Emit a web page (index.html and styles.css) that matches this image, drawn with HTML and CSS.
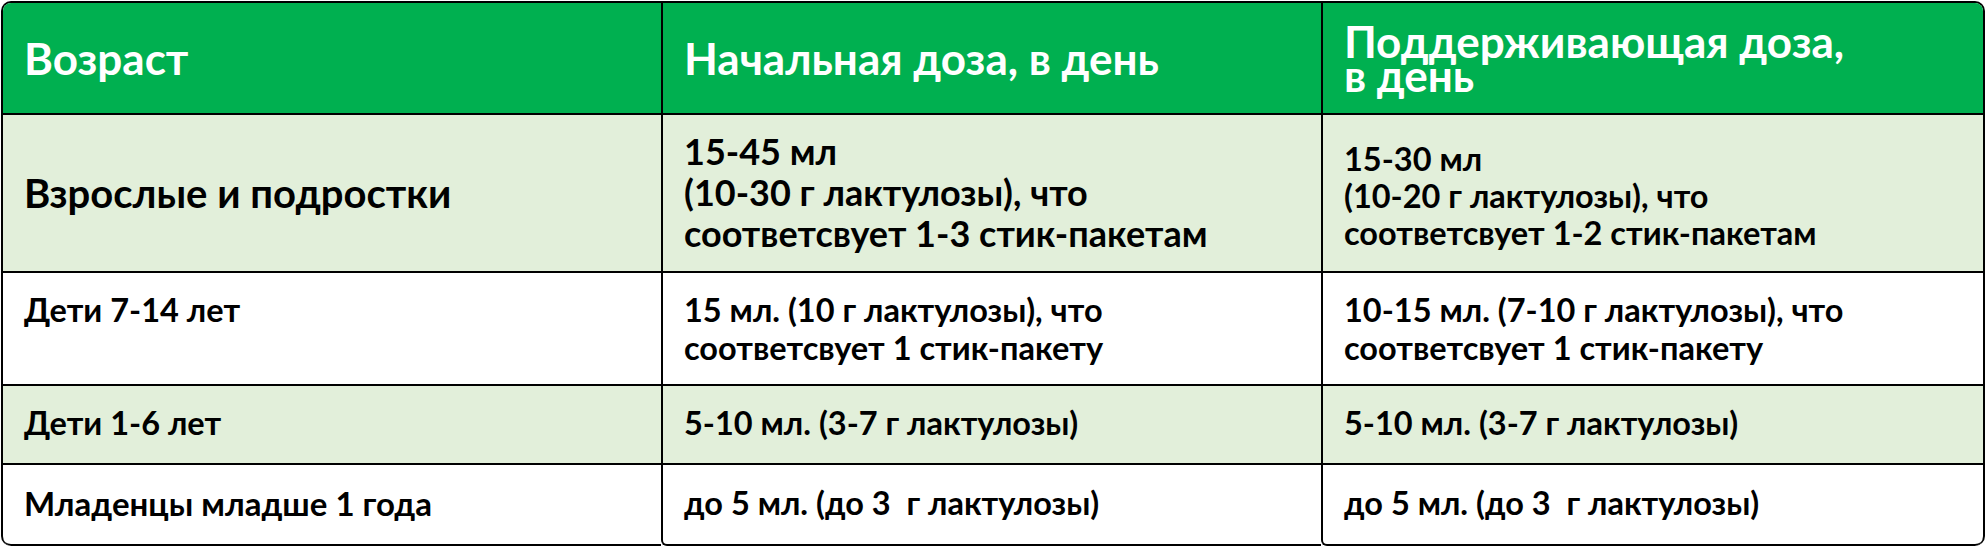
FILE: index.html
```html
<!DOCTYPE html>
<html lang="ru">
<head>
<meta charset="utf-8">
<title>Дозировка</title>
<link rel="stylesheet" href="styles.css">
</head>
<body>
<div class="frame">
  <div class="grid">
    <div class="cell head">Возраст</div>
    <div class="cell head col">Начальная доза, в день</div>
    <div class="cell head col two">Поддерживающая доза,<br>в день</div>

    <div class="cell r1 tint age">Взрослые и подростки</div>
    <div class="cell r1 tint col big">15-45 мл<br>(10-30 г лактулозы), что<br>соответсвует 1-3 стик-пакетам</div>
    <div class="cell r1 tint col mid">15-30 мл<br>(10-20 г лактулозы), что<br>соответсвует 1-2 стик-пакетам</div>

    <div class="cell row">Дети 7-14 лет</div>
    <div class="cell row col">15 мл. (10 г лактулозы), что<br>соответсвует 1 стик-пакету</div>
    <div class="cell row col">10-15 мл. (7-10 г лактулозы), что<br>соответсвует 1 стик-пакету</div>

    <div class="cell row tint">Дети 1-6 лет</div>
    <div class="cell row tint col">5-10 мл. (3-7 г лактулозы)</div>
    <div class="cell row tint col">5-10 мл. (3-7 г лактулозы)</div>

    <div class="cell row last first">Младенцы младше 1 года</div>
    <div class="cell row col last">до 5 мл. (до 3&nbsp; г лактулозы)</div>
    <div class="cell row col last end">до 5 мл. (до 3&nbsp; г лактулозы)</div>
  </div>
</div>
</body>
</html>
```
FILE: styles.css
```css
html, body {
  margin: 0;
  padding: 0;
  background: #ffffff;
}
body {
  font-family: Lato, "Open Sans", "Liberation Sans", sans-serif;
  font-weight: 700;
  color: #000;
}
.frame {
  margin: 1px 0 0 1px;
  width: 1984px;
  height: 545px;
  border: 2px solid #000;
  border-bottom: 0;
  border-radius: 10px;
  overflow: hidden;
  box-sizing: border-box;
}
.grid {
  display: grid;
  grid-template-columns: 658px 660px 1fr;
  grid-template-rows: 110px 158px 113px 79px 1fr;
  height: 100%;
}
.cell {
  box-sizing: border-box;
  padding: 0 10px 0 21px;
  display: flex;
  flex-direction: column;
  justify-content: center;
  white-space: nowrap;
}
.cell.col {
  border-left: 2px solid #000;
}
.cell.r1, .cell.row {
  border-top: 2px solid #000;
}
.head {
  background: #00b050;
  color: #fff;
  font-size: 44px;
  line-height: 44px;
}
.head.two {
  line-height: 34px;
  padding-top: 0;
}
.tint {
  background: #e2efda;
}
.r1.age {
  font-size: 40px;
  line-height: 44px;
}
.r1.big {
  font-size: 36px;
  line-height: 41px;
  padding-bottom: 2px;
}
.r1.mid {
  font-size: 32.5px;
  line-height: 37px;
  padding-top: 4px;
}
.row {
  justify-content: flex-start;
  padding-top: 18px;
  font-size: 32.5px;
  line-height: 38px;
}
.row.first {
  font-size: 33px;
}
.row.last {
  padding-top: 19px;
  border-bottom: 2px solid #000;
}
.row.col.last {
  border-bottom-left-radius: 6px;
}
.row.last.first {
  border-bottom-left-radius: 8px;
}
.row.last.end {
  border-bottom-right-radius: 8px;
}
```
